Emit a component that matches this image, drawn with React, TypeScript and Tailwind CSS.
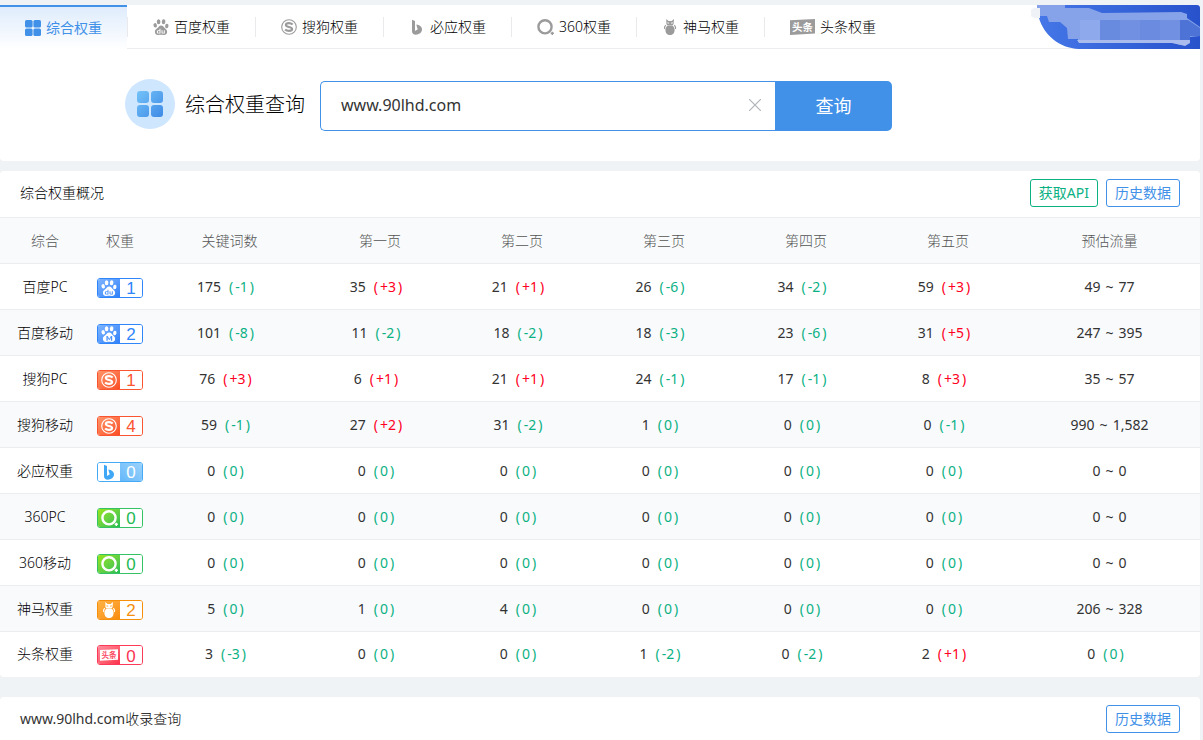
import React from 'react';

type IconProps = { className?: string };

const GridIcon = ({ className }: IconProps) => (
  <svg className={className} viewBox="0 0 16 16" fill="currentColor" aria-hidden="true">
    <rect x="0" y="0" width="7.6" height="7.6" rx="1.6" />
    <rect x="8.4" y="0" width="7.6" height="7.6" rx="1.6" />
    <rect x="0" y="8.4" width="7.6" height="7.6" rx="1.6" />
    <rect x="8.4" y="8.4" width="7.6" height="7.6" rx="1.6" />
  </svg>
);

const PawIcon = ({ className, mark = 'du' }: IconProps & { mark?: 'du' | 'm' }) => (
  <svg className={className} viewBox="0 0 16 16" fill="currentColor" aria-hidden="true">
    <ellipse cx="5.6" cy="2.7" rx="1.8" ry="2.5" />
    <ellipse cx="10.6" cy="2.8" rx="1.8" ry="2.5" transform="rotate(8 10.6 2.8)" />
    <ellipse cx="2.2" cy="6.3" rx="1.7" ry="2.2" transform="rotate(-14 2.2 6.3)" />
    <ellipse cx="13.8" cy="7" rx="1.7" ry="2.2" transform="rotate(10 13.8 7)" />
    <path
      fillRule="evenodd"
      d={
        mark === 'du'
          ? 'M8.1 6.4c2 0 2.700 1.800 4.100 3 1.300 1.100 2.100 2 1.900 3.800-.2 1.900-1.500 2.800-3.300 2.700-1.900-.1-3.500-.2-5.300 0-2 .2-3.500-.8-3.600-2.900-.1-1.900 1-2.700 2.300-3.700 1.400-1.100 2-2.900 3.900-2.900zM6.500 9.800v1.400H5.400c-1 0-1.600.7-1.600 1.700s.6 1.700 1.600 1.700h2.100V9.800zM6.500 12v1.800h-.9c-.5 0-.8-.4-.8-.9s.3-.9.8-.9zM8.500 11.300v2.200c0 .8.400 1.100 1.100 1.100h2.200v-3.300h-1v2.500H9.900c-.3 0-.4-.1-.4-.4v-2.100z'
          : 'M8.1 6.400c2 0 2.700 1.800 4.100 3 1.300 1.100 2.100 2 1.900 3.800-.2 1.900-1.500 2.800-3.300 2.700-1.900-.1-3.500-.2-5.300 0-2 .2-3.500-.8-3.600-2.900-.1-1.900 1-2.700 2.300-3.700 1.400-1.100 2-2.900 3.900-2.900zM5.400 14.800h1.300v-3.300L8 14h.6l1.300-2.500v3.300h1.300V9.900H9.900L8.300 12.700 6.700 9.900H5.400z'
      }
    />
  </svg>
);

const SogouIcon = ({ className }: IconProps) => (
  <svg className={className} viewBox="0 0 16 16" fill="none" stroke="currentColor" aria-hidden="true">
    <circle cx="8" cy="8" r="7.3" strokeWidth="1.100" />
    <path
      d="M11.700 5.500C10.500 4.500 9.300 4.200 7.900 4.200c-1.900 0-3 .7-3 1.800 0 2.600 6.200 1.300 6.200 4 0 1.200-1.300 1.900-3.100 1.900-1.500 0-2.900-.4-3.900-1.400"
      strokeWidth="2.200"
    />
  </svg>
);

const BingIcon = ({ className }: IconProps) => (
  <svg className={className} viewBox="0 0 16 16" fill="currentColor" aria-hidden="true">
    <path d="M3 .8l3 1.200v9.900l2.400-1.300c.6-.4.5-.9 0-1.200L7.300 5.600c3.100.6 5.700 1.800 5.700 4.900 0 3-3 5.200-6.200 5.200C4.500 15.700 3 14.300 3 12.300z" />
  </svg>
);

const QihooIcon = ({ className }: IconProps) => (
  <svg className={className} viewBox="0 0 17 16" aria-hidden="true">
    <circle cx="8" cy="7.800" r="6.600" fill="none" stroke="currentColor" strokeWidth="2.400" />
    <path d="M15.300 12.700v3.200M13.700 14.300h3.200" stroke="currentColor" strokeWidth="1.500" />
  </svg>
);

const ShenmaIcon = ({ className }: IconProps) => (
  <svg className={className} viewBox="0 0 16 16" fill="currentColor" aria-hidden="true">
    <path
      fillRule="evenodd"
      d="M4.300 0l2.200 2.100h3.200L12 0l-.4 4.800c-.2 1.200-1.200 1.600-1.200 1.600H5.700S4.500 5.900 4.400 4.700zM5.500 3.200v1.300h1.700V3.800zM10.700 3.200L9 3.800v.7h1.700z"
    />
    <path d="M5.500 6.700h5.100c1.300 1 2 2.400 2 4.200 0 3-1.900 5.100-4.600 5.100s-4.600-2.100-4.600-5.100c0-1.800.8-3.200 2.100-4.200z" />
    <path d="M3.900 6.300C2.600 7.200 2.300 8.700 2.800 10M12.200 6.300c1.300.9 1.600 2.400 1.100 3.700" fill="none" stroke="currentColor" strokeWidth="1.100" />
  </svg>
);

const ToutiaoIcon = ({ className, ink }: IconProps & { ink: string }) => (
  <svg className={className} viewBox="0 0 25 16" aria-hidden="true">
    <path d="M0 1.200L25 0v14.600L0 16z" fill="currentColor" />
    <text x="12.500" y="12.200" fontSize="10.500" fontWeight="700" textAnchor="middle" fill={ink} fontFamily="'Noto Sans CJK SC', sans-serif">
      头条
    </text>
  </svg>
);

const tabs = [
  { label: '百度权重', icon: <PawIcon className="size-4" /> },
  { label: '搜狗权重', icon: <SogouIcon className="size-4" /> },
  { label: '必应权重', icon: <BingIcon className="size-4" /> },
  { label: '360权重', icon: <QihooIcon className="h-4 w-[17px]" /> },
  { label: '神马权重', icon: <ShenmaIcon className="size-4" /> },
  { label: '头条权重', icon: <ToutiaoIcon className="h-4 w-[25px]" ink="#ffffff" /> },
];

type BadgeStyle = { box: string; mark: string; digit: string; icon: React.ReactNode };

const badgeStyles: Record<string, BadgeStyle> = {
  baidu: {
    box: 'border-[#2f86fb]',
    mark: 'bg-linear-to-br from-[#7db4ff] to-[#2f80fa] text-white',
    digit: 'bg-white text-[#2f86fb]',
    icon: <PawIcon className="size-4" />,
  },
  baiduMobile: {
    box: 'border-[#2f86fb]',
    mark: 'bg-linear-to-br from-[#7db4ff] to-[#2f80fa] text-white',
    digit: 'bg-white text-[#2f86fb]',
    icon: <PawIcon className="size-4" mark="m" />,
  },
  sogou: {
    box: 'border-[#fb5430]',
    mark: 'bg-linear-to-br from-[#ff9468] to-[#fb4a20] text-white',
    digit: 'bg-white text-[#fb5430]',
    icon: <SogouIcon className="size-4" />,
  },
  bing: {
    box: 'border-[#45aaf5]',
    mark: 'bg-white text-[#3fa7f5]',
    digit: 'bg-linear-to-bl from-[#9ad2fb] to-[#64b8fa] text-white',
    icon: <BingIcon className="size-4" />,
  },
  qihoo: {
    box: 'border-[#35c265]',
    mark: 'bg-linear-to-br from-[#96e60c] to-[#1dbd54] text-white',
    digit: 'bg-white text-[#1fb954]',
    icon: <QihooIcon className="h-4 w-[17px]" />,
  },
  shenma: {
    box: 'border-[#f68f0c]',
    mark: 'bg-linear-to-br from-[#ffb343] to-[#f98c05] text-white',
    digit: 'bg-white text-[#f68f0c]',
    icon: <ShenmaIcon className="size-4" />,
  },
  toutiao: {
    box: 'border-[#fb3a58]',
    mark: 'bg-linear-to-br from-[#ff8a9c] to-[#fb2c4b] text-white',
    digit: 'bg-white text-[#fb3352]',
    icon: <ToutiaoIcon className="h-3 w-[18px]" ink="#fb4a64" />,
  },
};

const Badge = ({ kind, value }: { kind: string; value: number }) => {
  const s = badgeStyles[kind];
  return (
    <span className={`mx-auto mt-0.5 flex h-5 w-[46px] overflow-hidden rounded-[3px] border ${s.box}`}>
      <span className={`flex w-[22px] items-center justify-center ${s.mark}`}>{s.icon}</span>
      <span className={`flex flex-1 items-center justify-center pt-0.5 font-['Liberation_Sans',sans-serif] text-[17px] leading-none font-normal ${s.digit}`}>
        {value}
      </span>
    </span>
  );
};

type Cell = [number, number];
type Row = { name: string; kind: string; weight: number; cells: Cell[]; traffic: string[]; change?: number };

const zero: Cell = [0, 0];
const rows: Row[] = [
  { name: '百度PC', kind: 'baidu', weight: 1, cells: [[175, -1], [35, 3], [21, 1], [26, -6], [34, -2], [59, 3]], traffic: ['49', '77'] },
  { name: '百度移动', kind: 'baiduMobile', weight: 2, cells: [[101, -8], [11, -2], [18, -2], [18, -3], [23, -6], [31, 5]], traffic: ['247', '395'] },
  { name: '搜狗PC', kind: 'sogou', weight: 1, cells: [[76, 3], [6, 1], [21, 1], [24, -1], [17, -1], [8, 3]], traffic: ['35', '57'] },
  { name: '搜狗移动', kind: 'sogou', weight: 4, cells: [[59, -1], [27, 2], [31, -2], [1, 0], [0, 0], [0, -1]], traffic: ['990', '1,582'] },
  { name: '必应权重', kind: 'bing', weight: 0, cells: [zero, zero, zero, zero, zero, zero], traffic: ['0', '0'] },
  { name: '360PC', kind: 'qihoo', weight: 0, cells: [zero, zero, zero, zero, zero, zero], traffic: ['0', '0'] },
  { name: '360移动', kind: 'qihoo', weight: 0, cells: [zero, zero, zero, zero, zero, zero], traffic: ['0', '0'] },
  { name: '神马权重', kind: 'shenma', weight: 2, cells: [[5, 0], [1, 0], [4, 0], zero, zero, zero], traffic: ['206', '328'] },
  { name: '头条权重', kind: 'toutiao', weight: 0, cells: [[3, -3], zero, zero, [1, -2], [0, -2], [2, 1]], traffic: ['0'], change: 0 },
];

const Change = ({ value }: { value: number }) => (
  <span className={`mr-2 ml-2 ${value > 0 ? 'text-[#ff0022]' : 'text-[#0bb183]'}`}>
    (<span className="mx-0.5">{value > 0 ? `+${value}` : value}</span>)
  </span>
);

const columns = ['综合', '权重', '关键词数', '第一页', '第二页', '第三页', '第四页', '第五页', '预估流量'];

const outlineButton = 'h-7 rounded-[3px] border px-2 leading-5';

const Banner = () => (
  <svg className="absolute top-0 right-0 h-11 w-[169px]" viewBox="0 0 169 44" aria-hidden="true">
    <defs>
      <linearGradient id="banner" x1="0" y1="0" x2="1" y2="0">
        <stop offset="0" stopColor="#4577e8" />
        <stop offset="1" stopColor="#2752cc" />
      </linearGradient>
    </defs>
    <path d="M6 0H166a3 3 0 0 1 3 3V44H48C28 43 13 30 8 13L6 9z" fill="url(#banner)" />
    <path d="M6 0h28v3h24l13 5 79-1 6 2v4l13 9v9l-10 1-2 3-1 3-6 2-14-3H47v-3H37l-1-11-7-6H18l-2-6H8V3H6z" fill="#86a2e8" />
    <path d="M49 15h20v20H49z" fill="#8eaaec" />
    <path d="M69 15h20v20H69z" fill="#688be0" />
    <path d="M89 15h60v20H89z" fill="#7190e2" />
    <path d="M109 15h20v20h-20z" fill="#6b8be0" />
    <path d="M149 15h8l12 8v8h-10v4h-10z" fill="#4c73d5" />
    <path d="M46 35h113v3l-5 3-12-3H48z" fill="#aabcee" />
    <path d="M4 3h5v10H4a5 5 0 0 1 0-10z" fill="#eff3f7" />
  </svg>
);

export default function App() {
  return (
    <div className="min-h-screen overflow-hidden bg-[#eff3f6] pt-[5px] pr-[3px] font-['Noto_Sans','Noto_Sans_CJK_SC',sans-serif] text-sm text-[#333333]">
      <header className="relative h-[156px] rounded-b bg-white">
        <nav className="flex h-11 items-stretch">
          <a
            href="#all"
            className="flex items-center gap-[5px] border-t-2 border-[#4191e8] bg-linear-to-b from-[#dfecfc] to-white px-[25px] text-[#4191e8]"
          >
            <GridIcon className="size-4" />
            综合权重
          </a>
          <div className="flex flex-1 items-center border-b border-[#ebedf0]">
            {tabs.map((t) => (
              <React.Fragment key={t.label}>
                <span className="h-5 w-px bg-[#eaeaec]" />
                <a href="#tab" className="flex items-center gap-[5px] px-[25px] font-light text-black">
                  <span className="text-[#9b9b9b]">{t.icon}</span>
                  {t.label}
                </a>
              </React.Fragment>
            ))}
          </div>
        </nav>
        <Banner />
        <form className="flex items-start pt-[30px] pl-[125px]" onSubmit={(e) => e.preventDefault()}>
          <span className="flex size-[50px] items-center justify-center rounded-full bg-[#cfe6ff]">
            <svg className="size-[26px]" viewBox="0 0 26 26" aria-hidden="true">
              <defs>
                <linearGradient id="tiles" gradientUnits="userSpaceOnUse" x1="0" y1="0" x2="26" y2="26">
                  <stop offset="0" stopColor="#74c2f8" />
                  <stop offset="1" stopColor="#3d8ae6" />
                </linearGradient>
              </defs>
              <path
                fill="url(#tiles)"
                d="M3 0h6a3 3 0 0 1 3 3v6a3 3 0 0 1-3 3H3a3 3 0 0 1-3-3V3a3 3 0 0 1 3-3zM17 0h6a3 3 0 0 1 3 3v6a3 3 0 0 1-3 3h-6a3 3 0 0 1-3-3V3a3 3 0 0 1 3-3zM3 14h6a3 3 0 0 1 3 3v6a3 3 0 0 1-3 3H3a3 3 0 0 1-3-3v-6a3 3 0 0 1 3-3zM17 14h6a3 3 0 0 1 3 3v6a3 3 0 0 1-3 3h-6a3 3 0 0 1-3-3v-6a3 3 0 0 1 3-3z"
              />
            </svg>
          </span>
          <label htmlFor="site" className="mx-[10px] w-[120px] text-xl leading-[52px] font-light whitespace-nowrap text-black">
            综合权重查询
          </label>
          <div className="mt-0.5 ml-[5px] flex h-[50px]">
            <div className="flex w-[455px] items-center rounded-l-[5px] border border-r-0 border-[#4191e8] pr-[14px] pb-0.5 pl-5">
              <input id="site" type="text" defaultValue="www.90lhd.com" className="min-w-0 flex-1 text-base outline-none" />
              <button type="button" aria-label="清空" className="text-[#b0b3b8]">
                <svg className="size-3" viewBox="0 0 12 12" stroke="currentColor" strokeWidth="1.200" aria-hidden="true">
                  <path d="M0 0L12 12M12 0L0 12" />
                </svg>
              </button>
            </div>
            <button type="submit" className="w-[117px] rounded-r-[5px] bg-[#4191e8] text-lg text-white">
              查询
            </button>
          </div>
        </form>
      </header>

      <section className="mt-[10px] overflow-hidden rounded bg-white">
        <div className="flex h-[46px] items-center justify-between px-5 pb-0.5">
          <h2 className="font-light text-black">综合权重概况</h2>
          <div className="flex gap-2">
            <button type="button" className={`${outlineButton} border-[#0bb183] text-[#0bb183]`}>获取API</button>
            <button type="button" className={`${outlineButton} border-[#4191e8] text-[#4191e8]`}>历史数据</button>
          </div>
        </div>
        <table className="w-full table-fixed border-collapse text-center">
          <colgroup>
            <col className="w-[90px]" />
            <col className="w-[60px]" />
            <col className="w-[159px]" />
            <col className="w-[142px]" />
            <col className="w-[142px]" />
            <col className="w-[142px]" />
            <col className="w-[142px]" />
            <col className="w-[142px]" />
            <col />
          </colgroup>
          <thead>
            <tr className="h-[46px] border-t border-[#ebedf0] bg-[#f8fafc] text-[#555555]">
              {columns.map((c) => (
                <th key={c} className="p-0 font-light">{c}</th>
              ))}
            </tr>
          </thead>
          <tbody>
            {rows.map((r) => (
              <tr key={r.name} className="h-[46px] border-t border-[#ebedf0] last:h-[45px] even:bg-[#f8fafc]">
                <td className="p-0 font-light text-black">{r.name}</td>
                <td className="p-0">
                  <Badge kind={r.kind} value={r.weight} />
                </td>
                {r.cells.map(([n, d], i) => (
                  <td key={i} className="p-0">
                    {n}
                    <Change value={d} />
                  </td>
                ))}
                <td className="p-0">
                  {r.traffic[0]}
                  {r.traffic[1] && (
                    <>
                      <span className="mx-[5px]">~</span>
                      {r.traffic[1]}
                    </>
                  )}
                  {r.change !== undefined && <Change value={r.change} />}
                </td>
              </tr>
            ))}
          </tbody>
        </table>
      </section>

      <section className="mt-5 rounded-t bg-white">
        <div className="flex h-[46px] items-center justify-between px-5 pb-0.5">
          <h2>www.90lhd.com<span className="font-light text-black">收录查询</span></h2>
          <button type="button" className={`${outlineButton} border-[#4191e8] text-[#4191e8]`}>历史数据</button>
        </div>
      </section>
    </div>
  );
}
